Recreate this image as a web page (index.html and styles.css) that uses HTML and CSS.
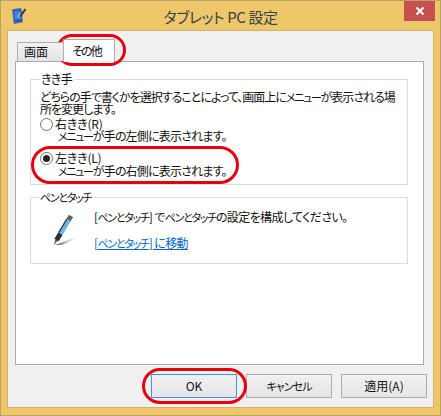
FILE: index.html
```html
<!DOCTYPE html>
<html lang="ja">
<head>
<meta charset="utf-8">
<title>タブレット PC 設定</title>
<link rel="stylesheet" href="styles.css">
</head>
<body>
<div class="window">
  <div class="titlebar">
    <svg class="app-icon" width="16" height="18" viewBox="0 0 16 18">
      <path d="M0.5 2.5 L9 1.5 L10.5 15 L2 16.5 Z" fill="#2f55a8" stroke="#5a7fb0" stroke-width="1"/>
      <path d="M2 4 L8 3.5 L9 12 L3 13 Z" fill="#3f7fe0"/>
      <path d="M5 10 L8 5 L9 11 Z" fill="#8fc0f0"/>
      <path d="M8 10 L13.5 2" stroke="#3a3a40" stroke-width="2" fill="none"/>
    </svg>
    <div class="title">タブレット PC 設定</div>
    <div class="close"><svg width="10" height="10" viewBox="0 0 10 10"><path d="M1.5 1.5 L8.5 8.5 M8.5 1.5 L1.5 8.5" stroke="#fff" stroke-width="2"/></svg></div>
  </div>
  <div class="client">
    <div class="tabs">
      <div class="tab">画面</div>
      <div class="tab active">その他</div>
    </div>
    <div class="panel">
      <fieldset class="group first">
        <legend>きき手</legend>
        <p class="desc">どちらの手で書くかを選択することによって、画面上に<span class="k">メニュー</span>が表示される場<br>所を変更します。</p>
        <div class="option">
          <span class="radio"></span>
          <div><span class="lab">右きき(R)</span><div class="sub"><span class="k">メニュー</span>が手の左側に表示されます。</div></div>
        </div>
        <div class="option second">
          <span class="radio on"></span>
          <div><span class="lab">左きき(L)</span><div class="sub"><span class="k">メニュー</span>が手の右側に表示されます。</div></div>
        </div>
      </fieldset>
      <fieldset class="group pen">
        <legend><span class="k">ペンとタッチ</span></legend>
        <svg class="pen-icon" width="30" height="34" viewBox="0 0 30 34">
          <defs><linearGradient id="sh" x1="0" x2="1" y1="1" y2="0"><stop offset="0" stop-color="#666"/><stop offset="1" stop-color="#ddd" stop-opacity="0"/></linearGradient></defs>
          <path d="M4 31 L24 23 L29 23 L11 31 Z" fill="url(#sh)"/>
          <path d="M3 31 L4.5 25 L7 26.5 Z" fill="#555"/>
          <path d="M5.5 26 L9.5 19.5" stroke="#2a2c30" stroke-width="5" fill="none"/>
          <path d="M9.5 19.5 L17.5 6" stroke="#6fb4de" stroke-width="5" fill="none"/>
          <path d="M7.8 18.5 L15.8 5" stroke="#27404f" stroke-width="1.4" fill="none"/>
          <path d="M17.5 6 L20 2" stroke="#5c646c" stroke-width="5" fill="none"/>
        </svg>
        <div class="pen-text">
          <div>[<span class="k">ペンとタッチ</span>] で<span class="k">ペンとタッチ</span>の設定を構成してください。</div>
          <a class="link" href="#">[<span class="k">ペンとタッチ</span>] に移動</a>
        </div>
      </fieldset>
    </div>
    <div class="buttons">
      <button class="btn default">OK</button>
      <button class="btn"><span class="k-btn">キャンセル</span></button>
      <button class="btn">適用(A)</button>
    </div>
  </div>
</div>
<div class="mark mark-tab"></div>
<div class="mark mark-radio"></div>
<div class="mark mark-ok"></div>
</body>
</html>
```
FILE: styles.css
```css
* { box-sizing: border-box; }
html, body { margin: 0; padding: 0; }
body {
  width: 441px;
  height: 416px;
  position: relative;
  overflow: hidden;
  font: 12px/12px "Noto Sans CJK JP", sans-serif;
  font-feature-settings: "palt";
  letter-spacing: -0.6px;
  color: #111;
  background: #efc76b;
}
.k { font-size: 11px; letter-spacing: -1.3px; }
.k-btn { font-size: 11px; letter-spacing: -0.9px; }
.lab { letter-spacing: -0.2px; }
.window {
  width: 441px;
  height: 416px;
  border: 1px solid #b9a468;
  display: flex;
  flex-direction: column;
}
.titlebar {
  height: 29px;
  display: flex;
  align-items: flex-start;
  position: relative;
  flex: none;
}
.app-icon { position: absolute; left: 11px; top: 6px; }
.title {
  flex: 1;
  text-align: center;
  font-size: 15px;
  line-height: 20px;
  padding-top: 6px;
  letter-spacing: -0.4px;
  color: #37424a;
}
.close {
  position: absolute;
  right: 5px;
  top: 0;
  width: 31px;
  height: 20px;
  background: #c75050;
  display: flex;
  align-items: center;
  justify-content: center;
}
.client {
  margin: 0 6px 7px;
  flex: 1;
  background: #f0f0f0;
  border: 1px solid #d0b368;
  padding: 8px 9px 0 7px;
  display: flex;
  flex-direction: column;
}
.tabs {
  display: flex;
  height: 22px;
  align-items: flex-end;
  padding-left: 2px;
  position: relative;
  z-index: 1;
  letter-spacing: 0;
}
.tab {
  width: 47px;
  height: 19px;
  padding: 3px 0 0 6px;
  border: 1px solid #acacac;
  border-bottom: none;
  background: linear-gradient(#f0f0f0, #e5e5e5);
}
.tab.active {
  height: 23px;
  margin-left: -1px;
  margin-bottom: -1px;
  width: 52px;
  padding: 5px 0 0 8px;
  letter-spacing: -1.8px;
  background: #fff;
}
.panel {
  height: 304px;
  background: #fff;
  border: 1px solid #acacac;
  padding: 10px 15px 0 14px;
}
.group {
  margin: 0;
  border: 1px solid #dcdcdc;
  padding: 0 9px;
}
.group legend { padding: 0 3px 0 1px; line-height: 14px; }
.first { height: 113px; }
.desc { margin: 5px 0 0; letter-spacing: -1px; white-space: nowrap; }
.option { display: flex; gap: 2px; margin-top: 3px; }
.option.second { margin-top: 10px; }
.sub { padding-left: 3px; letter-spacing: -0.8px; white-space: nowrap; }
.second .sub { margin-top: 1px; }
.radio {
  width: 13px;
  height: 13px;
  border: 1px solid #707070;
  border-radius: 50%;
  background: #fff;
  flex: none;
  position: relative;
}
.radio.on::after {
  content: "";
  position: absolute;
  inset: 2px;
  border-radius: 50%;
  background: #222;
}
.pen {
  margin-top: 5px;
  height: 74px;
  display: flex;
  padding: 0 0 0 9px;
}
.pen legend { margin-left: -1px; }
.pen-icon { margin: 10px 0 0 11px; flex: none; }
.pen-text { margin-left: 13px; padding-top: 7px; }
.link { display: block; margin-top: 14px; color: #0066cc; }
.buttons {
  display: flex;
  justify-content: flex-end;
  gap: 9px;
  margin: 9px -3px 0 0;
}
.btn {
  width: 86px;
  height: 24px;
  padding: 0;
  border: 1px solid #acacac;
  background: linear-gradient(#f0f0f0, #e5e5e5);
  font: inherit;
  font-feature-settings: inherit;
  letter-spacing: 0;
  color: #111;
}
.btn.default { border-color: #3399ff; }
.mark {
  position: absolute;
  border: 3px solid #e8000e;
  border-radius: 999px;
  pointer-events: none;
}
.mark-tab { left: 56px; top: 34px; width: 70px; height: 32px; border-radius: 22px; }
.mark-radio { left: 31px; top: 146px; width: 208px; height: 38px; }
.mark-ok { left: 142px; top: 368px; width: 105px; height: 36px; }
```
